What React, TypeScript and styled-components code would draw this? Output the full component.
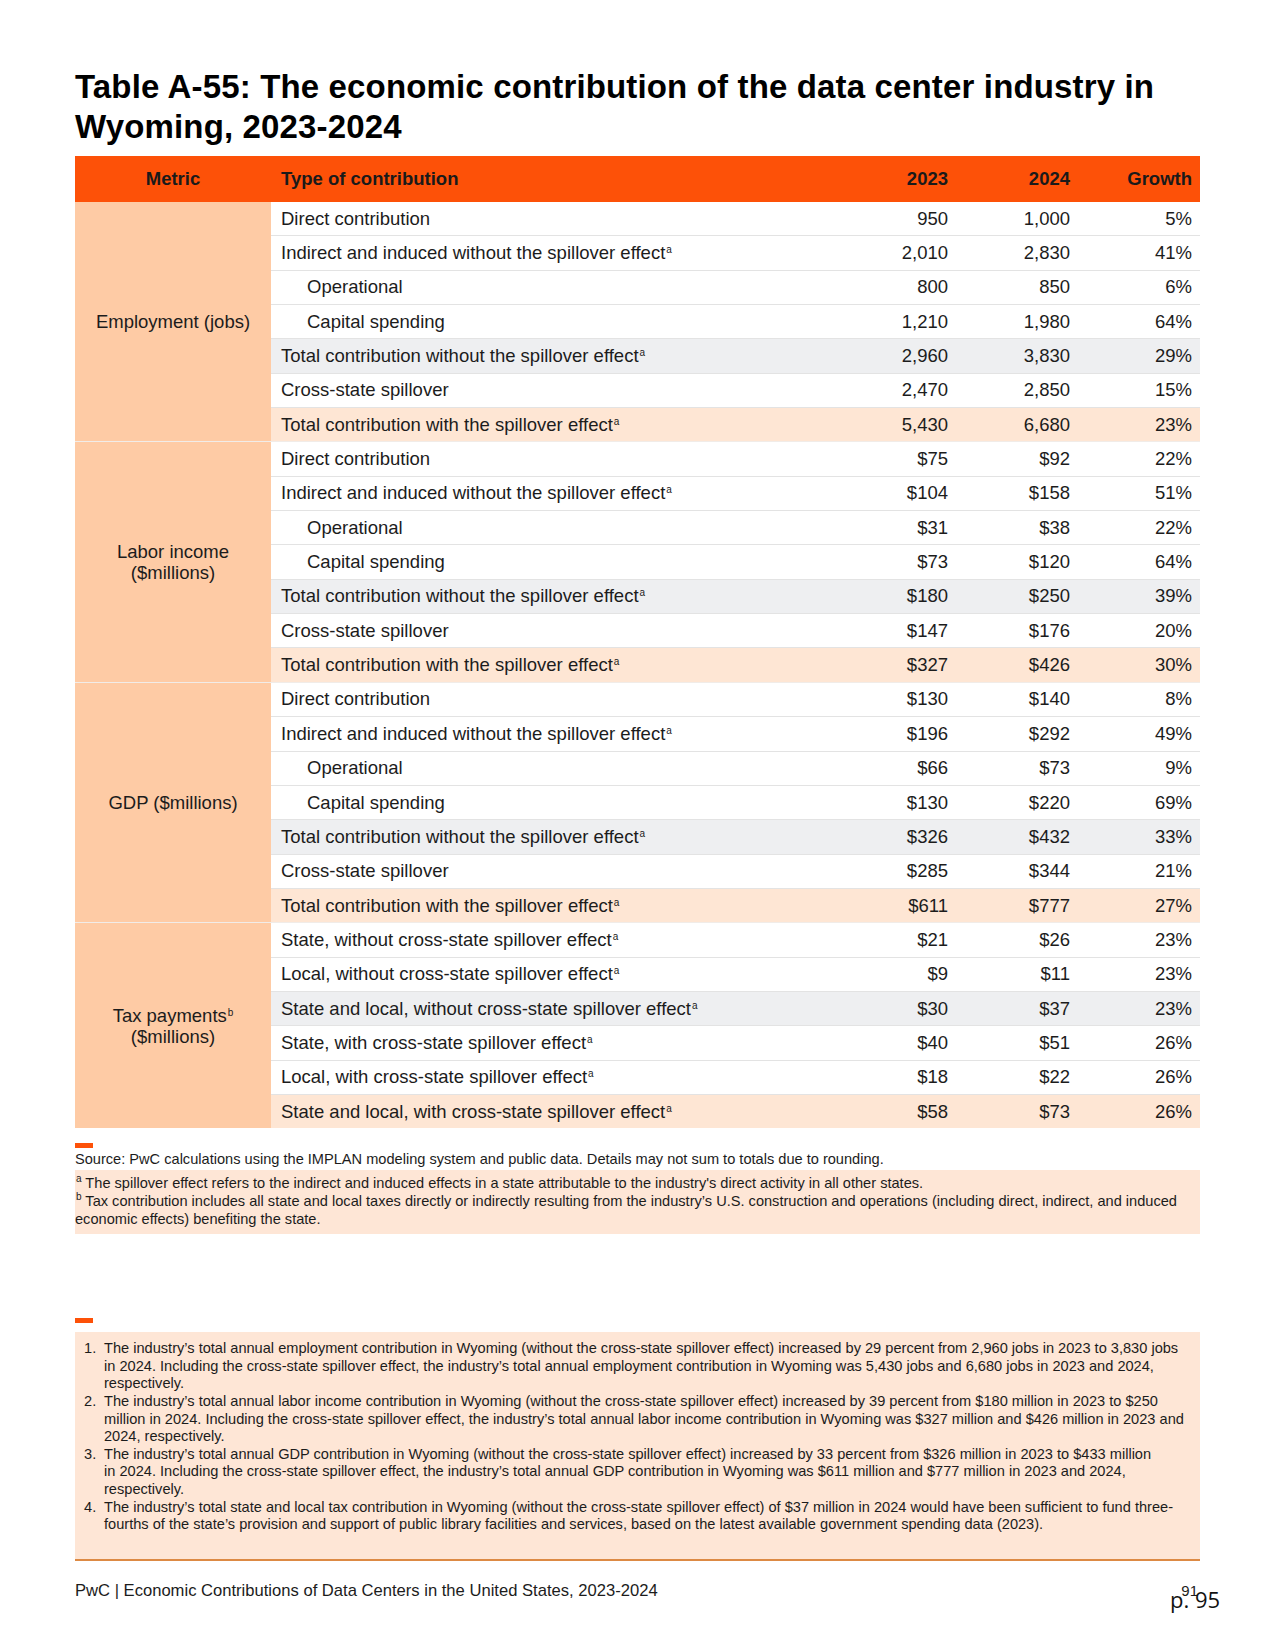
import React from "react";
import styled, { createGlobalStyle, css } from "styled-components";

const GlobalStyle = createGlobalStyle`
  html, body {
    margin: 0;
    padding: 0;
    background: #ffffff;
  }
  body {
    font-family: "Liberation Sans", Arial, sans-serif;
    color: #1c1c1c;
  }
`;

type RowKind = "plain" | "subtotal" | "total";

interface DataRow {
  label: string;
  sup?: boolean;
  indent?: boolean;
  kind?: RowKind;
  v23: string;
  v24: string;
  growth: string;
}

interface Group {
  metric: React.ReactNode;
  rows: DataRow[];
}

const Page = styled.div`
  width: 1125px;
  padding: 67px 75px 60px;
`;

const Title = styled.h1`
  margin: 0 0 9px;
  font-size: 33px;
  line-height: 40px;
  font-weight: 700;
  color: #000;
  letter-spacing: 0.15px;
`;

const Table = styled.div`
  display: flex;
  flex-direction: column;
`;

const cols = css`
  display: grid;
  grid-template-columns: 563px 122px 122px 122px;
`;

const HeadRow = styled.div`
  display: grid;
  grid-template-columns: 196px 563px 122px 122px 122px;
  height: 46px;
  background: #fd5108;
  align-items: center;
`;

const HeadCell = styled.div<{ $align: "left" | "right" | "center" }>`
  font-size: 18.5px;
  font-weight: 700;
  color: #1a1a1a;
  text-align: ${(p) => p.$align};
  padding: ${(p) => (p.$align === "right" ? "0 8px 0 0" : p.$align === "left" ? "0 0 0 10px" : "0")};
`;

const GroupBlock = styled.div<{ $first: boolean }>`
  display: flex;
  ${(p) => !p.$first && "border-top: 1px solid #f1ece8;"}
`;

const MetricCell = styled.div`
  width: 196px;
  flex-shrink: 0;
  background: #fecba5;
  display: flex;
  align-items: center;
  justify-content: center;
  text-align: center;
  font-size: 18.5px;
  line-height: 21px;
`;

const Rows = styled.div`
  flex: 1;
  display: flex;
  flex-direction: column;
`;

const rowBg: Record<RowKind, string> = {
  plain: "#ffffff",
  subtotal: "#eeeff1",
  total: "#fee6d4",
};

const Row = styled.div<{ $kind: RowKind; $first: boolean }>`
  ${cols};
  box-sizing: border-box;
  height: ${(p) => (p.$first ? "33.35px" : "34.35px")};
  align-items: center;
  background: ${(p) => rowBg[p.$kind]};
  ${(p) => !p.$first && "border-top: 1px solid #e3e3e3;"}
  font-size: 18.5px;
`;

const LabelCell = styled.div<{ $indent?: boolean }>`
  padding-left: ${(p) => (p.$indent ? "36px" : "10px")};
  white-space: nowrap;
`;

const NumCell = styled.div`
  text-align: right;
  padding-right: 8px;
`;

const Sup = styled.sup`
  font-size: 10px;
  vertical-align: 6px;
  line-height: 0;
  margin-left: 1px;
`;

const Bar = styled.div<{ $top: number }>`
  width: 18px;
  height: 5px;
  background: #fd5108;
  margin-top: ${(p) => p.$top}px;
`;

const Source = styled.div`
  margin-top: 3px;
  font-size: 14.6px;
  line-height: 17px;
`;

const Footnotes = styled.div`
  margin-top: 2px;
  background: #fee6d6;
  padding: 4px 0 6px;
  font-size: 14.6px;
  line-height: 18px;
  white-space: nowrap;
`;

const NoteBox = styled.div`
  margin-top: 9px;
  background: #fee6d6;
  border-bottom: 2px solid #dd8a44;
  padding: 8px 0 0 9px;
  font-size: 14.6px;
  line-height: 17.6px;
  height: 219px;
`;

const NoteItem = styled.div`
  display: flex;
`;

const NoteNum = styled.div`
  width: 20px;
  flex-shrink: 0;
`;

const NoteText = styled.div`
  white-space: nowrap;
`;

const Footer = styled.div`
  position: relative;
  margin-top: 20px;
  display: flex;
  justify-content: space-between;
  font-size: 16.6px;
  line-height: 20px;
`;

const PageNo = styled.span`
  font-size: 15px;
  padding-right: 2px;
`;

const Stamp = styled.div`
  position: absolute;
  left: 1095px;
  top: 3px;
  white-space: nowrap;
  font-family: "Open Sans", "Noto Sans", sans-serif;
  font-size: 22px;
  line-height: 30px;
  color: #111;
`;

const groups: Group[] = [
  {
    metric: "Employment (jobs)",
    rows: [
      { label: "Direct contribution", v23: "950", v24: "1,000", growth: "5%" },
      { label: "Indirect and induced without the spillover effect", sup: true, v23: "2,010", v24: "2,830", growth: "41%" },
      { label: "Operational", indent: true, v23: "800", v24: "850", growth: "6%" },
      { label: "Capital spending", indent: true, v23: "1,210", v24: "1,980", growth: "64%" },
      { label: "Total contribution without the spillover effect", sup: true, kind: "subtotal", v23: "2,960", v24: "3,830", growth: "29%" },
      { label: "Cross-state spillover", v23: "2,470", v24: "2,850", growth: "15%" },
      { label: "Total contribution with the spillover effect", sup: true, kind: "total", v23: "5,430", v24: "6,680", growth: "23%" },
    ],
  },
  {
    metric: (
      <>
        Labor income
        <br />
        ($millions)
      </>
    ),
    rows: [
      { label: "Direct contribution", v23: "$75", v24: "$92", growth: "22%" },
      { label: "Indirect and induced without the spillover effect", sup: true, v23: "$104", v24: "$158", growth: "51%" },
      { label: "Operational", indent: true, v23: "$31", v24: "$38", growth: "22%" },
      { label: "Capital spending", indent: true, v23: "$73", v24: "$120", growth: "64%" },
      { label: "Total contribution without the spillover effect", sup: true, kind: "subtotal", v23: "$180", v24: "$250", growth: "39%" },
      { label: "Cross-state spillover", v23: "$147", v24: "$176", growth: "20%" },
      { label: "Total contribution with the spillover effect", sup: true, kind: "total", v23: "$327", v24: "$426", growth: "30%" },
    ],
  },
  {
    metric: "GDP ($millions)",
    rows: [
      { label: "Direct contribution", v23: "$130", v24: "$140", growth: "8%" },
      { label: "Indirect and induced without the spillover effect", sup: true, v23: "$196", v24: "$292", growth: "49%" },
      { label: "Operational", indent: true, v23: "$66", v24: "$73", growth: "9%" },
      { label: "Capital spending", indent: true, v23: "$130", v24: "$220", growth: "69%" },
      { label: "Total contribution without the spillover effect", sup: true, kind: "subtotal", v23: "$326", v24: "$432", growth: "33%" },
      { label: "Cross-state spillover", v23: "$285", v24: "$344", growth: "21%" },
      { label: "Total contribution with the spillover effect", sup: true, kind: "total", v23: "$611", v24: "$777", growth: "27%" },
    ],
  },
  {
    metric: (
      <>
        Tax payments<Sup>b</Sup>
        <br />
        ($millions)
      </>
    ),
    rows: [
      { label: "State, without cross-state spillover effect", sup: true, v23: "$21", v24: "$26", growth: "23%" },
      { label: "Local, without cross-state spillover effect", sup: true, v23: "$9", v24: "$11", growth: "23%" },
      { label: "State and local, without cross-state spillover effect", sup: true, kind: "subtotal", v23: "$30", v24: "$37", growth: "23%" },
      { label: "State, with cross-state spillover effect", sup: true, v23: "$40", v24: "$51", growth: "26%" },
      { label: "Local, with cross-state spillover effect", sup: true, v23: "$18", v24: "$22", growth: "26%" },
      { label: "State and local, with cross-state spillover effect", sup: true, kind: "total", v23: "$58", v24: "$73", growth: "26%" },
    ],
  },
];

const notes: string[][] = [
  [
    "The industry’s total annual employment contribution in Wyoming (without the cross-state spillover effect) increased by 29 percent from 2,960 jobs in 2023 to 3,830 jobs",
    "in 2024. Including the cross-state spillover effect, the industry’s total annual employment contribution in Wyoming was 5,430 jobs and 6,680 jobs in 2023 and 2024,",
    "respectively.",
  ],
  [
    "The industry’s total annual labor income contribution in Wyoming (without the cross-state spillover effect) increased by 39 percent from $180 million in 2023 to $250",
    "million in 2024. Including the cross-state spillover effect, the industry’s total annual labor income contribution in Wyoming was $327 million and $426 million in 2023 and",
    "2024, respectively.",
  ],
  [
    "The industry’s total annual GDP contribution in Wyoming (without the cross-state spillover effect) increased by 33 percent from $326 million in 2023 to $433 million",
    "in 2024. Including the cross-state spillover effect, the industry’s total annual GDP contribution in Wyoming was $611 million and $777 million in 2023 and 2024,",
    "respectively.",
  ],
  [
    "The industry’s total state and local tax contribution in Wyoming (without the cross-state spillover effect) of $37 million in 2024 would have been sufficient to fund three-",
    "fourths of the state’s provision and support of public library facilities and services, based on the latest available government spending data (2023).",
  ],
];

export default function App() {
  return (
    <>
      <GlobalStyle />
      <Page>
        <Title>
          Table A-55: The economic contribution of the data center industry in
          <br />
          Wyoming, 2023-2024
        </Title>

        <Table>
          <HeadRow>
            <HeadCell $align="center">Metric</HeadCell>
            <HeadCell $align="left">Type of contribution</HeadCell>
            <HeadCell $align="right">2023</HeadCell>
            <HeadCell $align="right">2024</HeadCell>
            <HeadCell $align="right">Growth</HeadCell>
          </HeadRow>
          {groups.map((g, gi) => (
            <GroupBlock key={gi} $first={gi === 0}>
              <MetricCell>
                <div>{g.metric}</div>
              </MetricCell>
              <Rows>
                {g.rows.map((r, ri) => (
                  <Row key={ri} $kind={r.kind ?? "plain"} $first={ri === 0}>
                    <LabelCell $indent={r.indent}>
                      {r.label}
                      {r.sup && <Sup>a</Sup>}
                    </LabelCell>
                    <NumCell>{r.v23}</NumCell>
                    <NumCell>{r.v24}</NumCell>
                    <NumCell>{r.growth}</NumCell>
                  </Row>
                ))}
              </Rows>
            </GroupBlock>
          ))}
        </Table>

        <Bar $top={15} />
        <Source>
          Source: PwC calculations using the IMPLAN modeling system and public data. Details may not sum to totals due to rounding.
        </Source>
        <Footnotes>
          <div>
            <Sup>a</Sup> The spillover effect refers to the indirect and induced effects in a state attributable to the industry's direct activity in all other states.
          </div>
          <div>
            <Sup>b</Sup> Tax contribution includes all state and local taxes directly or indirectly resulting from the industry’s U.S. construction and operations (including direct, indirect, and induced
          </div>
          <div>economic effects) benefiting the state.</div>
        </Footnotes>

        <Bar $top={84} />
        <NoteBox>
          {notes.map((lines, i) => (
            <NoteItem key={i}>
              <NoteNum>{i + 1}.</NoteNum>
              <NoteText>
                {lines.map((l, li) => (
                  <div key={li}>{l}</div>
                ))}
              </NoteText>
            </NoteItem>
          ))}
        </NoteBox>

        <Footer>
          <span>PwC | Economic Contributions of Data Centers in the United States, 2023-2024</span>
          <PageNo>91</PageNo>
          <Stamp>p. 95</Stamp>
        </Footer>
      </Page>
    </>
  );
}
